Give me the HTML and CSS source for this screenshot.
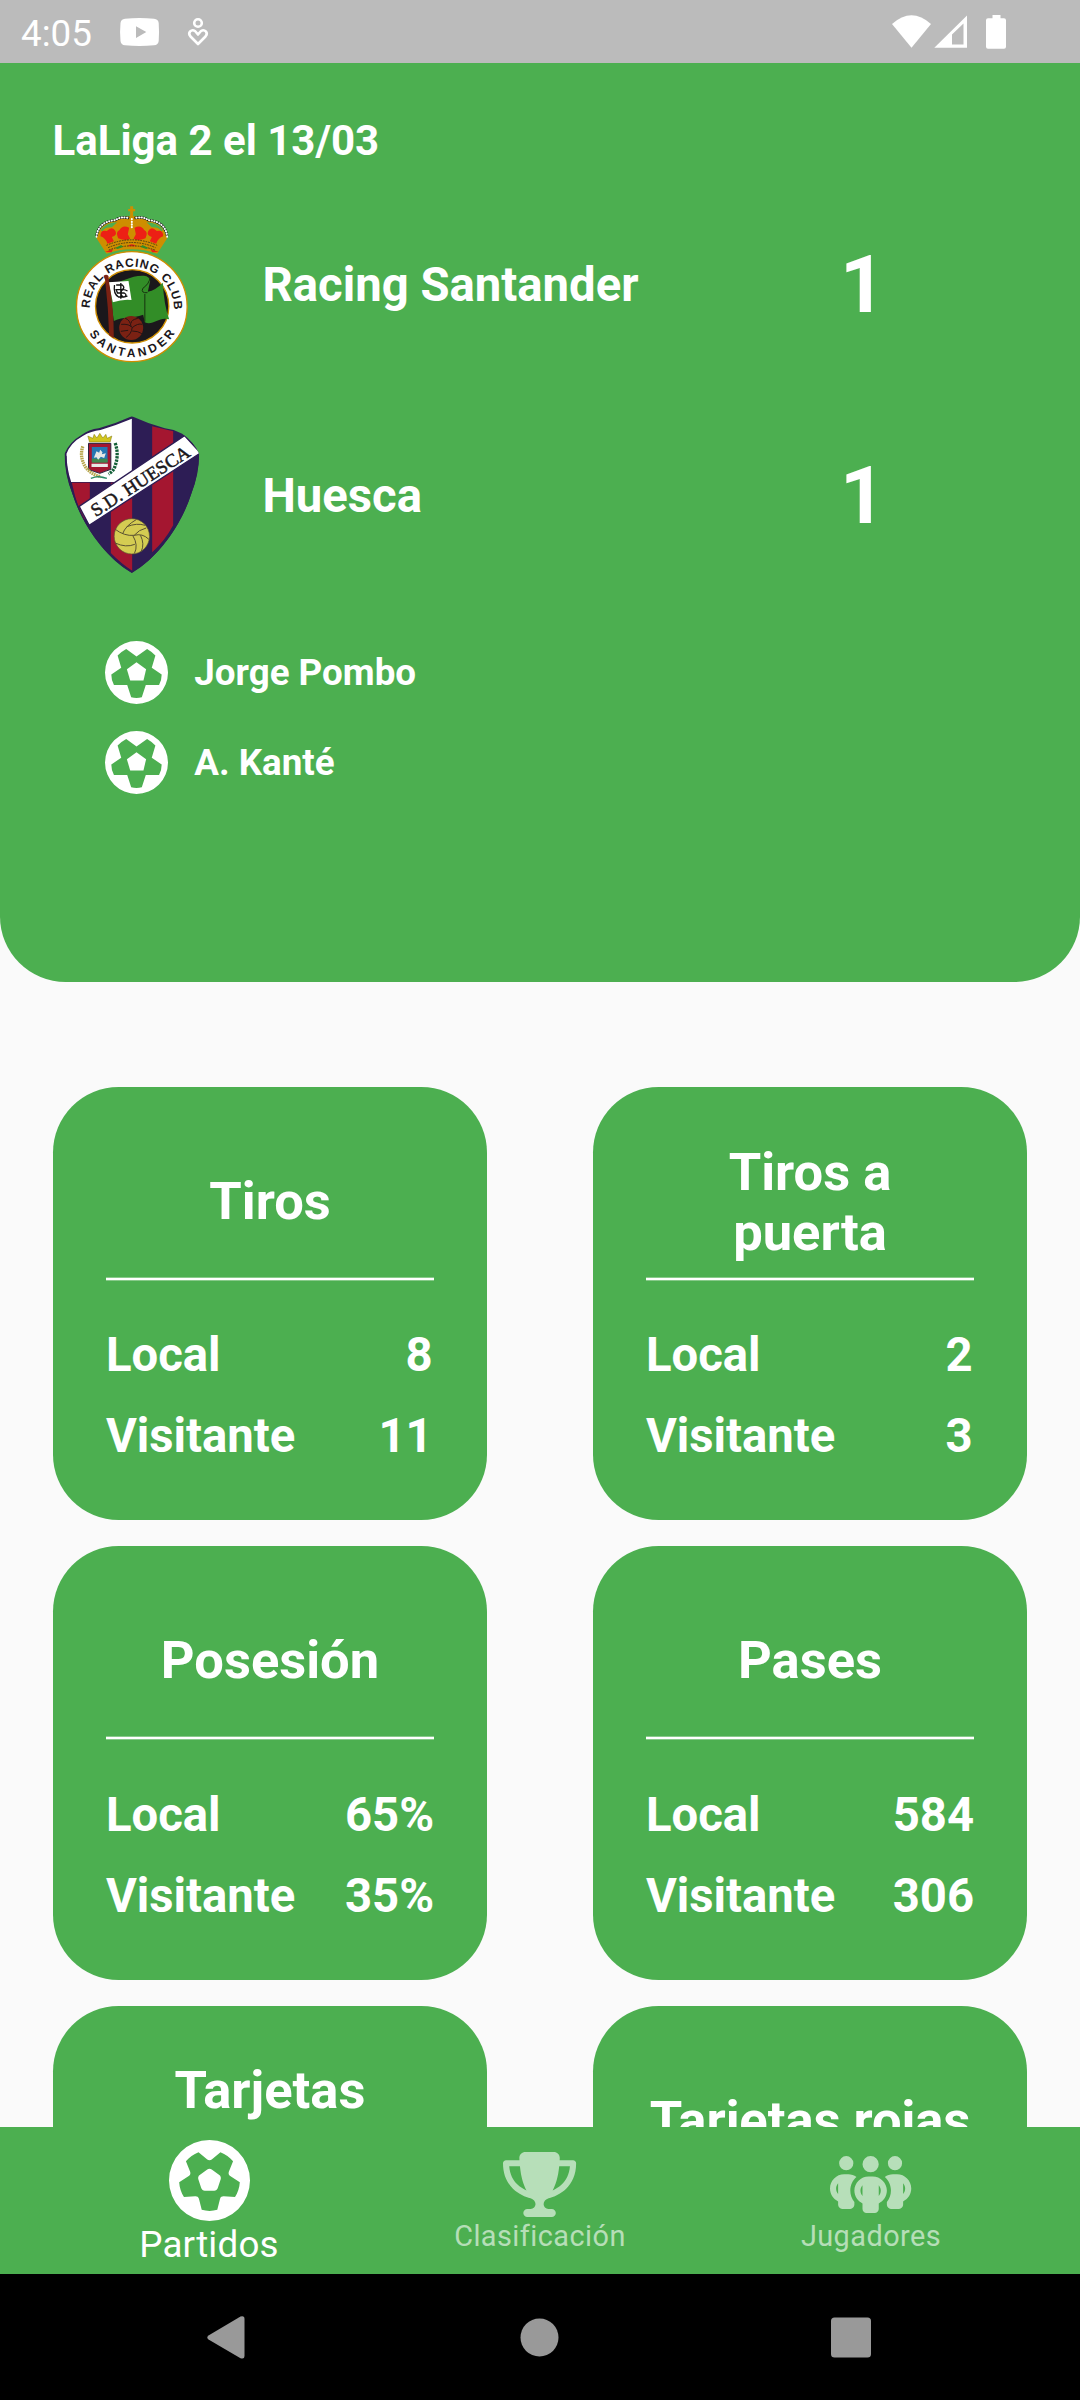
FILE: index.html
```html
<!DOCTYPE html>
<html lang="es">
<head>
<meta charset="utf-8">
<title>LaLiga 2</title>
<link rel="stylesheet" href="styles.css">
</head>
<body>
<svg class="defs" aria-hidden="true">
  <symbol id="goal" viewBox="0 0 190 190">
    <path fill-rule="evenodd" d="M95 0a95 95 0 1 0 0 190a95 95 0 1 0 0-190zM95 47L127 24Q141 32 152 44L141 81L171 101Q171 118 163 133L123 133L111 170Q95 174 79 170L67 133L27 133Q19 118 19 101L49 81L38 44Q49 32 64 24z"/>
    <path d="M95 64L124 85L116 119H76L66 85z"/>
  </symbol>
</svg>
<div class="screen">
  <div class="status">
    <span class="clock">4:05</span>
    <svg class="youtube" viewBox="0 0 39 28"><path fill-rule="evenodd" d="M5 .7Q19.500-.7 34 .7Q38.300 1 38.700 5Q39.400 14 38.700 23Q38.300 27 34 27.300Q19.500 28.700 5 27.300Q1 27 .5 23Q-.4 14 .5 5Q1 1 5 .7zM16 8.200V20L26.300 14z"/></svg>
    <svg class="heart" viewBox="0 0 20 28"><g fill="none" stroke="#fff" stroke-width="2.600"><circle cx="10" cy="5" r="3.800"/><path stroke-linejoin="round" d="M10 26L2.500 18.500C-.8 14.500 3.500 10.800 7 13L10 16.500L13 13C16.500 10.800 20.800 14.500 17.500 18.500z"/></g></svg>
    <svg class="signals" viewBox="892 12 116 38"><path d="M892 23Q911.500 5.500 931 23L911.500 46.700z"/><path fill-rule="evenodd" d="M934.300 46.700L967 14.500V46.700zM952 33.500V43.500H963.500V22.500z"/><path d="M992.500 14h8v3.300h3.500q2 0 2 2v26.500q0 2-2 2h-16q-2 0-2-2V19.300q0-2 2-2h4.500z"/></svg>
  </div>

  <main class="content">
    <section class="match">
      <h1 class="league">LaLiga 2 el 13/03</h1>
      <div class="team">
        <svg class="crest" viewBox="7.500 30 472.500 472.500">
          <defs>
            <path id="arcTop" d="M118 341A126 126 0 1 1 370 341"/>
            <path id="arcBottom" d="M113 412A153 153 0 0 0 375 412"/>
          </defs>
          <g fill="#ce8e00">
            <path d="M239 34h9v8h6v7h-6v14h-9V49h-6v-7h6z"/>
            <path d="M138 130Q150 82 200 76Q244 50 288 76Q338 84 350 130L320 176Q244 150 168 176z"/>
          </g>
          <g fill="#4caf50"><path d="M151 105Q168 83 200 82L184 97Q163 96 155 109zM337 105Q320 83 288 82L304 97Q325 96 333 109z"/></g>
          <g fill="#ed2015">
            <path d="M150 124Q149 103 169 108Q186 91 195 109Q201 122 184 126L190 139L171 146Q165 129 150 124z"/>
            <path d="M338 124Q339 103 319 108Q302 91 293 109Q287 122 304 126L298 139L317 146Q323 129 338 124z"/>
            <path d="M203 130Q194 111 207 105Q216 88 236 98L232 118L239 131Q225 139 203 130z"/>
            <path d="M285 130Q294 111 281 105Q272 88 252 98L256 118L249 131Q263 139 285 130z"/>
            <path d="M231 154q13-12 26 0zM163 171l25-9-5 10zM325 171l-25-9 5 10z"/>
          </g>
          <g fill="none" stroke="#4b3b12" stroke-width="3" stroke-dasharray="5 3">
            <path d="M168 151Q244 118 320 151M173 158Q244 127 315 158M175 165Q244 140 313 165"/>
          </g>
          <path fill="#328d27" d="M194 159l18-9 6 6-17 6zM294 159l-18-9-6 6 17 6z"/>
          <g fill="none" stroke="#111" stroke-width="7">
            <path d="M138 125Q142 80 196 75Q207 64 236 69M350 125Q346 80 292 75Q281 64 252 69"/>
          </g>
          <g fill="none" stroke="#fff" stroke-width="6" stroke-linecap="round" stroke-dasharray="1 7">
            <path d="M138 125Q142 80 196 75Q207 64 236 69M350 125Q346 80 292 75Q281 64 252 69M244 72V98"/>
          </g>
          <ellipse cx="244" cy="335" rx="166" ry="165" fill="#fff" stroke="#ce8e00" stroke-width="4"/>
          <circle cx="245" cy="334" r="110" fill="#1b171b" stroke="#ce8e00" stroke-width="4"/>
          <path fill="#328d27" d="M174 262C211 268 236 240 280 242Q298 244 299 258L292 290Q315 286 337 263Q340 328 356 373C325 363 309 393 283 382L278 359C246 372 219 362 190 378z"/>
          <path fill="none" stroke="#17330f" stroke-width="3" d="M299 246Q297 266 277 280Q270 295 291 293M283 297V380"/>
          <path fill="#fff" d="M174 262L234 258L243 315Q216 312 187 322z"/>
          <g fill="none" stroke="#111" stroke-width="4"><path d="M197 270h18q10 8 0 14h-18l4 10h20q11 6 0 12h-17q-16-10-12-36M211 264v47M231 288q-18-11-20 6q2 17 20 9"/></g>
          <path fill="#7b2113" d="M159 243q8-7 15 0l1 14q15 80 15 173l-14-9q-2-80-12-166z"/>
          <circle cx="242" cy="399" r="36" fill="#7b2113"/>
          <path fill="none" stroke="#2a1412" stroke-width="3" d="M212 388q25-2 33 10q17-14 30-10M245 398q-2 18-18 29M224 370q15 4 18 26M262 370q-22 5-20 15M245 408q18 0 29 8M211 409l22-3"/>
          <text class="crest-text racing-top"><textPath href="#arcTop" startOffset="1" textLength="398">REAL RACING CLUB</textPath></text>
          <text class="crest-text racing-bottom"><textPath href="#arcBottom" startOffset="5" textLength="306">SANTANDER</textPath></text>
        </svg>
        <span class="team-name">Racing Santander</span>
        <span class="score">1</span>
      </div>
      <div class="team">
        <svg class="crest" viewBox="7.500 35 472.500 472.500">
          <defs><clipPath id="shield"><path d="M244 36Q196 58 145 72Q115 75 93 92Q58 112 42 148Q42 210 66 269C96 362 164 459 244 506C324 459 392 362 422 269Q446 210 446 148Q430 112 395 88Q370 75 343 72Q292 58 244 36z"/></clipPath></defs>
          <g clip-path="url(#shield)">
            <path fill="#2d1d55" d="M30 30h430v480H30z"/>
            <path fill="#a41630" d="M64 235h54v110H98Q75 290 64 235zM181 235h64v264Q213 479 181 446zM305 66l63 15v282Q343 410 305 444z"/>
            <path fill="#fff" d="M48 148Q60 115 98 94Q122 80 150 77Q196 63 244 43V205L200 233H62Q48 190 48 148z"/>
            <path fill="#fff" stroke="#2d1d55" stroke-width="4" d="M86 306L402 94L450 146L116 363z"/>
          </g>
          <path fill="none" stroke="#2d1d55" stroke-width="4" d="M46 155Q46 210 68 269C98 362 166 457 244 503C322 457 390 362 420 269Q442 210 443 155"/>
          <path fill="#d1c51e" stroke="#7c7411" stroke-width="1.500" d="M117 113L112 95L127 102L131 90L139 101L148 87L157 101L166 90L170 102L184 95L179 113z"/>
          <path fill="#a41630" stroke="#2b2440" stroke-width="3" d="M114 117h67v78q-14 5-33 12q-20-6-34-12z"/>
          <path fill="#2676b2" d="M124 128h47v45h-47z"/>
          <path fill="#3f8850" d="M124 163h47v12h-47z"/>
          <path fill="#e8e9e6" d="M130 160l8-19 8 4 3-9 7 8-2 6 12-3-5 14-10-4-8 9-5-7zM123 178h49v10h-49z"/>
          <path fill="none" stroke="#b7a64d" stroke-width="10" stroke-dasharray="5 2" d="M97 126Q86 157 105 188Q122 211 151 217"/>
          <path fill="none" stroke="#136038" stroke-width="10" stroke-dasharray="7 3" d="M194 116Q206 151 194 184Q190 200 174 209"/>
          <path fill="none" stroke="#2b8b65" stroke-width="4" d="M121 222q24-10 48 0M139 216l30 6"/>
          <circle cx="244" cy="396" r="53" fill="#d4cc52" stroke="#5a5131" stroke-width="2"/>
          <path fill="none" stroke="#5a5131" stroke-width="3" d="M193 374q28 22 58 19q25-7 44 12M216 389q9-25 41-43M229 367q30-12 55-4M247 394q17 28 5 53M270 393q13 26 2 49M194 416q32 15 59 4M251 393q14-17 36-22"/>
          <text class="crest-text huesca" transform="translate(136 339) rotate(-33)" textLength="342" lengthAdjust="spacingAndGlyphs">S.D. HUESCA</text>
        </svg>
        <span class="team-name">Huesca</span>
        <span class="score">1</span>
      </div>
      <ul class="goals">
        <li class="goal"><svg class="goal-icon"><use href="#goal"/></svg>Jorge Pombo</li>
        <li class="goal"><svg class="goal-icon"><use href="#goal"/></svg>A. Kanté</li>
      </ul>
    </section>

    <section class="stats">
      <article class="card"><h2 class="card-title">Tiros</h2><div class="rule"></div><div class="row inset"><span>Local</span><span>8</span></div><div class="row inset"><span>Visitante</span><span>11</span></div></article>
      <article class="card"><h2 class="card-title two-line">Tiros a puerta</h2><div class="rule"></div><div class="row inset"><span>Local</span><span>2</span></div><div class="row inset"><span>Visitante</span><span>3</span></div></article>
      <article class="card"><h2 class="card-title">Posesión</h2><div class="rule"></div><div class="row"><span>Local</span><span>65%</span></div><div class="row"><span>Visitante</span><span>35%</span></div></article>
      <article class="card"><h2 class="card-title">Pases</h2><div class="rule"></div><div class="row"><span>Local</span><span>584</span></div><div class="row"><span>Visitante</span><span>306</span></div></article>
      <article class="card"><h2 class="card-title two-line">Tarjetas<br>&nbsp;</h2></article>
      <article class="card"><h2 class="card-title">Tarjetas rojas</h2></article>
    </section>
  </main>

  <nav class="tabs">
    <div class="tab active">
      <svg class="tab-icon" viewBox="0 0 512 512"><path d="M417.300 360.100l-71.600-4.800c-5.200-.3-10.300 1.100-14.500 4.200s-7.200 7.400-8.400 12.500l-17.600 69.600C289.500 445.800 273 448 256 448s-33.500-2.200-49.200-6.400L189.200 372c-1.300-5-4.300-9.400-8.400-12.500s-9.300-4.500-14.500-4.200l-71.600 4.800c-17.600-27.200-28.500-59.200-30.400-93.600L125 228.300c4.400-2.800 7.600-7 9.200-11.900s1.400-10.200-.5-15l-26.700-66.600C128 109.200 155.300 89 186.700 76.900l55.200 46c4 3.300 9 5.100 14.100 5.100s10.200-1.800 14.100-5.100l55.200-46c31.300 12.100 58.700 32.300 79.600 57.900l-26.700 66.600c-1.900 4.800-2.100 10.100-.5 15s4.900 9.100 9.200 11.900l60.700 38.200c-1.900 34.400-12.800 66.400-30.400 93.600zM256 512A256 256 0 1 0 256 0a256 256 0 1 0 0 512zm14.100-325.700c-8.400-6.100-19.800-6.100-28.200 0L194 221c-8.400 6.100-11.900 16.900-8.700 26.800l18.300 56.300c3.200 9.900 12.400 16.600 22.800 16.600h59.200c10.400 0 19.600-6.700 22.800-16.600l18.300-56.300c3.200-9.900-.3-20.700-8.700-26.800l-47.900-34.800z" fill-rule="evenodd"/></svg>
      <span>Partidos</span>
    </div>
    <div class="tab">
      <svg class="tab-icon" viewBox="0 0 576 512"><path d="M400 0H176c-26.500 0-48.100 21.800-47.100 48.200c.2 5.300 .4 10.600 .7 15.800H24C10.700 64 0 74.700 0 88c0 92.600 33.500 157 78.500 200.700c44.300 43.100 98.300 64.800 138.100 75.800c23.400 6.500 39.400 26 39.400 45.600c0 20.900-17 37.900-37.900 37.900H192c-17.700 0-32 14.300-32 32s14.300 32 32 32H384c17.700 0 32-14.300 32-32s-14.300-32-32-32H357.900C337 448 320 431 320 410.100c0-19.600 15.900-39.200 39.400-45.600c39.900-11 93.900-32.700 138.200-75.800C542.500 245 576 180.600 576 88c0-13.300-10.700-24-24-24H446.400c.3-5.200 .5-10.400 .7-15.800C448.100 21.800 426.500 0 400 0zM48.900 112h84.400c9.100 90.100 29.200 150.300 51.900 190.600c-24.900-11-50.800-26.500-73.200-48.300c-32-31.100-58-76-63-142.300zM464.100 254.300c-22.400 21.800-48.300 37.300-73.200 48.300c22.700-40.300 42.800-100.500 51.900-190.600h84.400c-5.100 66.300-31.100 111.200-63 142.300z"/></svg>
      <span>Clasificación</span>
    </div>
    <div class="tab">
      <svg class="tab-icon" viewBox="0 0 640 512"><path d="M72 88a56 56 0 1 1 112 0A56 56 0 1 1 72 88zM64 245.700C54 256.900 48 271.800 48 288s6 31.100 16 42.300V245.700zm144.400-49.300C178.700 222.700 160 261.200 160 304c0 34.300 12 65.800 32 90.500V416c0 17.700-14.300 32-32 32H96c-17.700 0-32-14.300-32-32V389.200C26.200 371.200 0 332.700 0 288c0-61.900 50.100-112 112-112h32c24 0 46.200 7.500 64.400 20.300zM448 416V394.500c20-24.700 32-56.200 32-90.500c0-42.800-18.700-81.300-48.400-107.700C449.800 183.500 472 176 496 176h32c61.900 0 112 50.100 112 112c0 44.700-26.200 83.200-64 101.200V416c0 17.700-14.300 32-32 32H480c-17.700 0-32-14.300-32-32zm8-328a56 56 0 1 1 112 0A56 56 0 1 1 456 88zM576 245.700v84.700c10-11.300 16-26.100 16-42.300s-6-31.100-16-42.300zM320 32a64 64 0 1 1 0 128 64 64 0 1 1 0-128zM240 304c0 16.200 6 31 16 42.300V261.700c-10 11.300-16 26.100-16 42.300zm144-42.300v84.700c10-11.300 16-26.100 16-42.300s-6-31.100-16-42.300zM448 304c0 44.700-26.200 83.200-64 101.200V448c0 17.700-14.300 32-32 32H288c-17.700 0-32-14.300-32-32V405.200c-37.800-18-64-56.500-64-101.200c0-61.900 50.100-112 112-112h32c61.900 0 112 50.100 112 112z" fill-rule="evenodd"/></svg>
      <span>Jugadores</span>
    </div>
  </nav>

  <div class="system-nav">
    <svg viewBox="0 0 38 43"><path d="M1.500 19.500L33.500.6Q37.500-.6 37.500 3V40Q37.500 43.500 33.500 42.200L1.500 23.500Q-1 21.500 1.500 19.500z"/></svg>
    <svg viewBox="0 0 38 43"><circle cx="20.500" cy="21.500" r="19"/></svg>
    <svg viewBox="0 0 40 43"><rect y="1.500" width="40" height="40" rx="3.500"/></svg>
  </div>
</div>
</body>
</html>
```
FILE: styles.css
```css
* { box-sizing: border-box; }

body {
  margin: 0;
  background: #fafafa;
  color: #fff;
  font-family: Roboto, sans-serif;
  line-height: 1.172;
}

svg { display: block; flex: none; overflow: visible; fill: currentColor; }
.defs { display: none; }

.screen {
  display: flex;
  flex-direction: column;
  width: 1080px;
  height: 2400px;
  overflow: hidden;
}

.status {
  display: flex;
  align-items: center;
  flex: none;
  height: 63px;
  padding: 0 72px 0 21px;
  background: #bbb;
}
.clock { width: 99px; padding-top: 4px; font-size: 36.75px; }
.youtube { width: 39px; height: 28px; }
.heart { width: 20px; height: 28px; margin-left: 29px; }
.signals { width: 116px; height: 38px; margin-left: auto; }

.content { flex: none; height: 2064px; overflow: hidden; }

.match {
  height: 919px;
  padding: 52.500px 52.500px 0;
  border-radius: 0 0 65.600px 65.600px;
  background: #4caf50;
  font-weight: 700;
}
.league { margin: 0 0 14px; font-size: 42px; line-height: 49.200px; }
.team { display: flex; align-items: center; height: 211px; }
.crest { width: 157.500px; height: 157.500px; }
.team-name { width: 630px; padding: 2px 0 0 52.500px; font-size: 47.250px; }
.score { width: 46px; padding-top: 2px; font-size: 78.750px; }
.crest-text { fill: #1b171b; }
.racing-top, .racing-bottom { font-family: "Liberation Sans", sans-serif; font-size: 36px; font-weight: 700; }
.huesca { font-family: "Liberation Serif", serif; font-size: 56px; font-weight: 400; stroke: #1b171b; stroke-width: 1.500px; }

.goals { margin: 27.500px 0 0; padding: 0 0 0 52.500px; list-style: none; }
.goal { display: flex; align-items: center; height: 89.250px; font-size: 36.750px; gap: 26.250px; }
.goal-icon { width: 63px; height: 63px; }

.stats {
  display: grid;
  grid-template-columns: 540px 540px;
  justify-items: center;
  row-gap: 26.250px;
  padding-top: 105px;
}
.card {
  width: 433.200px;
  height: 433.200px;
  padding: 38px 52.500px 0;
  border-radius: 65.600px;
  background: #4caf50;
  font-weight: 700;
}
.card-title {
  display: flex;
  align-items: center;
  justify-content: center;
  height: 152px;
  margin: 0;
  font-size: 52.500px;
  line-height: 60.500px;
  text-align: center;
}
.two-line { padding-top: 2px; }
.rule {
  height: 4px;
  margin-bottom: 34.500px;
  background: linear-gradient(#fff5 0 1px, #fff 1px 3px, #fff5 3px);
}
.row {
  display: flex;
  align-items: center;
  justify-content: space-between;
  height: 81px;
  font-size: 47.250px;
}
.inset { padding-right: 1.500px; }

.tabs {
  display: flex;
  flex: none;
  justify-content: center;
  height: 147px;
  padding-top: 25px;
  background: #4caf50;
}
.tab {
  display: flex;
  flex-direction: column;
  align-items: center;
  width: 331px;
  color: rgba(255, 255, 255, .6);
  font-size: 28.875px;
  letter-spacing: .45px;
}
.tab-icon { height: 65px; margin-bottom: 3px; }
.tab.active { margin-top: -12px; color: #fff; font-size: 36.750px; letter-spacing: .2px; }
.tab.active .tab-icon { height: 81px; margin-bottom: 2px; }

.system-nav {
  display: flex;
  flex: none;
  align-items: center;
  justify-content: space-between;
  height: 126px;
  padding: 0 209px 0 206.500px;
  background: #000;
  color: #999;
}
.system-nav svg { height: 43px; }
```
